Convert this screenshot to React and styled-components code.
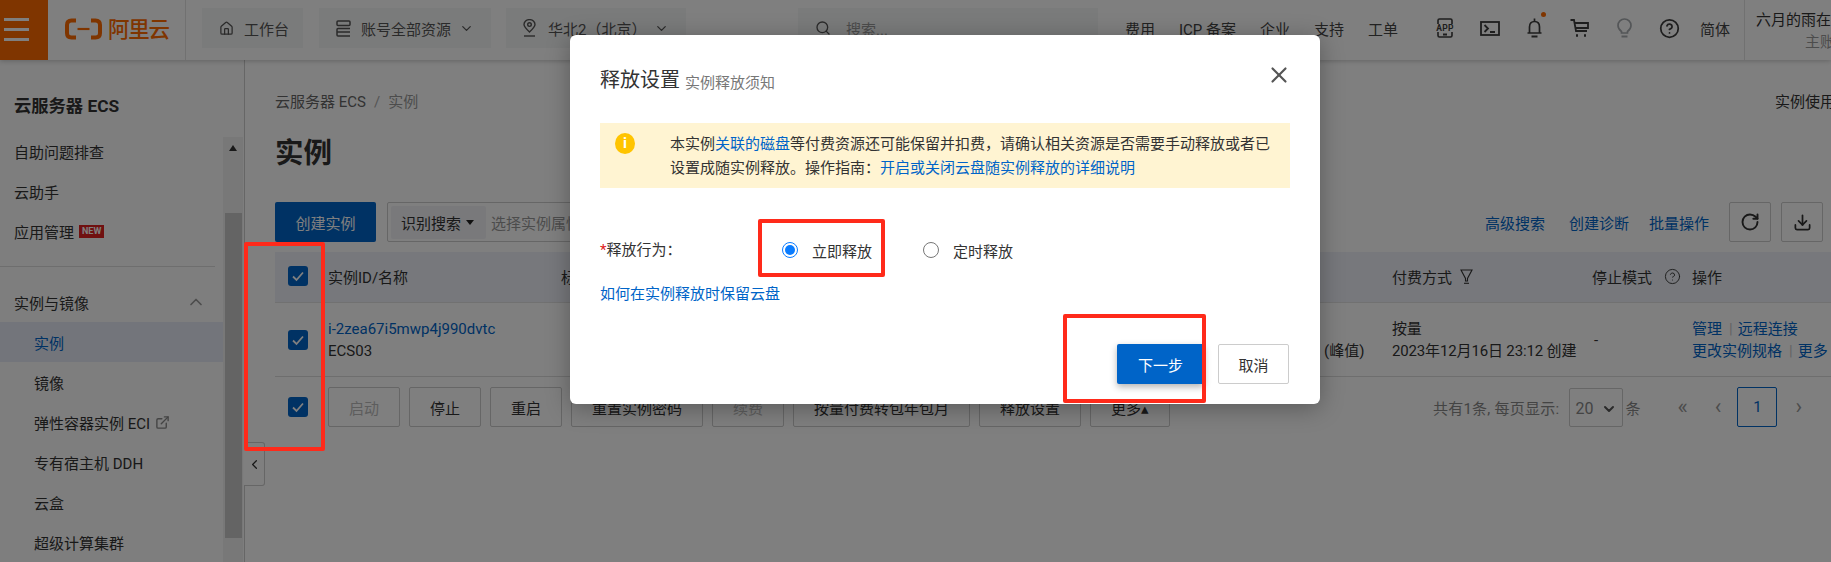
import React from "react";
import styled, { createGlobalStyle } from "styled-components";
import { Home, ChevronDown, ChevronUp, ChevronLeft, Search, X, RotateCw, Download, CircleHelp, ExternalLink } from "lucide-react";

const Global = createGlobalStyle`
  html, body { margin: 0; padding: 0; overflow: hidden; background: #fff; }
  body { font-family: Roboto, "Noto Sans CJK SC", sans-serif; font-size: 15px; color: #333; }
  * { box-sizing: border-box; }
`;

const Page = styled.div`
  position: relative;
  width: 1831px;
  height: 562px;
  overflow: hidden;
  display: flex;
  flex-direction: column;
  background: #fff;
`;

const Overlay = styled.div`
  position: absolute;
  inset: 0;
  z-index: 10;
  background: rgba(0, 0, 0, 0.5);
`;

/* ---------- top bar ---------- */
const TopBar = styled.header`
  flex: none;
  height: 60px;
  display: flex;
  background: #fff;
  box-shadow: 0 1px 5px rgba(0, 0, 0, 0.22);
  position: relative;
  z-index: 2;
  white-space: nowrap;
`;
const Burger = styled.div`
  width: 48px;
  background: #ff6a00;
  display: flex;
  flex-direction: column;
  gap: 7px;
  padding: 18px 0 0 4px;
  span { display: block; width: 25px; height: 3px; background: #fff; }
`;
const LogoWrap = styled.div`
  width: 138px;
  border-right: 1px solid #e3e3e3;
  display: flex;
  align-items: center;
  padding: 0 0 2px 17px;
  gap: 6px;
  color: #ff6a00;
  svg { display: block; }
`;
const LogoText = styled.span`
  font-size: 21.5px;
  font-weight: 500;
  letter-spacing: -1.2px;
  line-height: 24px;
  margin-top: 2px;
`;
const NavTab = styled.div`
  height: 40px;
  width: ${(p) => p.$w}px;
  margin: 8px 0 0 ${(p) => p.$ml}px;
  background: #f5f6f6;
  display: flex;
  align-items: center;
  gap: ${(p) => p.$gap || 10}px;
  padding-left: 17px;
  color: #555;
  svg { flex: none; }
`;
const Chevron = styled(ChevronDown)`
  margin-left: ${(p) => p.$ml}px;
`;
const SearchBox = styled(NavTab)`
  color: #999;
  gap: 15px;
  svg { color: #555; }
`;
const NavRight = styled.nav`
  display: flex;
  align-items: center;
  height: 56px;
  margin-left: 27px;
  color: #444;
`;
const NavLink = styled.span`
  margin-right: 24px;
  &:last-of-type { margin-right: 13px; }
`;
const IconSlot = styled.div`
  position: relative;
  width: 45px;
  display: flex;
  justify-content: center;
  align-items: center;
  color: #3c3c3c;
`;
const Dot = styled.i`
  position: absolute;
  top: -6px;
  left: 29px;
  width: 5px;
  height: 5px;
  border-radius: 50%;
  background: #ff6a00;
`;
const Lang = styled.span`
  margin-left: 8px;
  color: #444;
`;
const User = styled.div`
  height: 60px;
  margin-left: 14px;
  flex: 1;
  border-left: 1px solid #e3e3e3;
  padding: 9px 0 0 11px;
  line-height: 22px;
  overflow: hidden;
  color: #333;
`;
const UserRole = styled.div`
  margin: 0 0 0 49px;
  color: #999;
`;

/* ---------- body ---------- */
const Body = styled.div`
  flex: 1;
  min-height: 0;
  display: flex;
  position: relative;
`;
const Sidebar = styled.aside`
  flex: none;
  width: 245px;
  display: flex;
  border-right: 1px solid #ccc;
  background: #fcfcfc;
`;
const SideContent = styled.div`
  width: 223px;
  flex: none;
`;
const SideTitle = styled.div`
  height: 71px;
  padding: 34px 0 0 14px;
  font-size: 17.3px;
  font-weight: 700;
  line-height: 24px;
  color: #333;
`;
const SideItem = styled.div`
  height: 40px;
  display: flex;
  align-items: center;
  gap: 5px;
  padding-left: ${(p) => (p.$sub ? 34 : 14)}px;
  color: ${(p) => (p.$active ? "#0064c8" : "#333")};
  background: ${(p) => (p.$active ? "#e6ebf6" : "transparent")};
  white-space: nowrap;
`;
const GroupHead = styled(SideItem)`
  justify-content: space-between;
  padding-right: 17px;
`;
const SideDivider = styled.hr`
  width: 215px;
  margin: 15px 0 0;
  border: 0;
  border-top: 1px solid #ddd;
  height: 16px;
`;
const NewTag = styled.span`
  background: #e02020;
  color: #fff;
  font-size: 9px;
  font-weight: 700;
  line-height: 13px;
  padding: 0 3px;
`;
const ScrollTrack = styled.div`
  width: 20px;
  margin-top: 77px;
  background: #f1f1f1;
  position: relative;
  padding: 76px 1px 0 2px;
`;
const ScrollArrow = styled.i`
  position: absolute;
  top: 8px;
  left: 6px;
  border: 4.5px solid transparent;
  border-top: 0;
  border-bottom: 6px solid #333;
`;
const ScrollThumb = styled.div`
  height: 325px;
  background: #c8c8c8;
`;
const Collapse = styled.div`
  position: absolute;
  left: 244px;
  top: 382px;
  width: 21px;
  height: 44px;
  border: 1px solid #ccc;
  border-left: 0;
  border-radius: 0 3px 3px 0;
  background: #fff;
  display: flex;
  align-items: center;
  justify-content: center;
  color: #333;
`;

/* ---------- main ---------- */
const Main = styled.main`
  flex: 1;
  min-width: 0;
  padding: 31px 0 0 30px;
`;
const CrumbRow = styled.div`
  display: flex;
  justify-content: space-between;
  line-height: 22px;
  white-space: nowrap;
  overflow: hidden;
`;
const Crumbs = styled.div`
  color: #666;
  i { font-style: normal; margin: 0 8px; color: #aaa; }
  b { font-weight: 400; color: #999; }
`;
const Usage = styled.div`
  width: 56px;
  color: #333;
  overflow: hidden;
`;
const PageTitle = styled.h1`
  margin: 21px 0 0;
  font-size: 28.5px;
  font-weight: 700;
  line-height: 40px;
  color: #333;
`;
const Toolbar = styled.div`
  margin-top: 28px;
  height: 40px;
  display: flex;
  align-items: stretch;
`;
const Primary = styled.button`
  width: 101px;
  border: 0;
  border-radius: 2px;
  background: #0064c8;
  color: #fff;
  font: inherit;
  font-size: 15px;
  padding: 0;
`;
const SearchField = styled.div`
  margin-left: 11px;
  width: 700px;
  border: 1px solid #ccc;
  border-radius: 2px;
  display: flex;
  align-items: center;
  padding-left: 3px;
  color: #999;
`;
const FieldType = styled.div`
  height: 33px;
  width: 95px;
  background: #f2f3f7;
  border-radius: 2px;
  display: flex;
  align-items: center;
  gap: 5px;
  padding-left: 10px;
  margin-right: 5px;
  color: #333;
  &::after {
    content: "";
    border: 4.5px solid transparent;
    border-bottom: 0;
    border-top: 5px solid #222;
  }
`;
const ToolLinks = styled.div`
  margin-left: auto;
  display: flex;
  align-items: center;
  color: #0064c8;
  padding-right: 8px;
`;
const ToolLink = styled.a`
  margin-right: ${(p) => p.$mr}px;
`;
const IconBtn = styled.div`
  width: 42px;
  height: 40px;
  margin-right: ${(p) => p.$mr}px;
  border: 1px solid #ccc;
  border-radius: 2px;
  display: flex;
  align-items: center;
  justify-content: center;
  color: #333;
`;

const cols = "53px 233px 763px 68px 200px 100px 139px";
const HeadRow = styled.div`
  margin-top: 10px;
  height: 51px;
  padding-bottom: 2px;
  display: grid;
  grid-template-columns: ${cols};
  align-items: center;
  background: #eef1f8;
  border-bottom: 1px solid #e3e3e3;
  white-space: nowrap;
`;
const Row = styled.div`
  height: 74px;
  display: grid;
  grid-template-columns: ${cols};
  align-items: center;
  border-bottom: 1px solid #ddd;
  white-space: nowrap;
  line-height: 22px;
`;
const CheckCell = styled.div`
  padding-left: 13px;
  display: flex;
`;
const Check = styled.div`
  width: 20px;
  height: 20px;
  border-radius: 3px;
  background: #0064c8;
  display: flex;
  align-items: center;
  justify-content: center;
`;
const HeadCell = styled.div`
  display: flex;
  align-items: center;
  gap: 8px;
  color: #333;
`;
const HelpGap = styled(HeadCell)`
  gap: 12px;
`;
const Link = styled.a`
  color: #0064c8;
`;
const Sep = styled.i`
  font-style: normal;
  color: #c8c8c8;
  margin: 0 5px 0 7px;
`;
const Dash = styled.div`
  padding-left: 2px;
`;
const BillingCell = styled.div`
  letter-spacing: -0.15px;
`;
const ActionRow = styled.div`
  display: flex;
  align-items: flex-start;
  padding-top: 10px;
`;
const ActionCheck = styled(CheckCell)`
  width: 53px;
  padding-top: 10px;
  flex: none;
`;
const ActionBtns = styled.div`
  display: flex;
  gap: 9px;
`;
const ActionBtn = styled.button`
  height: 40px;
  padding: 0 20px;
  border: 1px solid #ccc;
  border-radius: 2px;
  background: #fff;
  color: ${(p) => (p.disabled ? "#bbb" : "#333")};
  font: inherit;
  font-size: 15px;
  white-space: nowrap;
`;
const Pager = styled.div`
  margin-left: auto;
  padding-right: 29px;
  display: flex;
  align-items: center;
  height: 40px;
  color: #888;
  white-space: nowrap;
`;
const PagerLabel = styled.span`
  letter-spacing: 0.25px;
`;
const PageSelect = styled.div`
  width: 54px;
  height: 39px;
  margin: 1px 2px 0 10px;
  border: 1px solid #ccc;
  border-radius: 2px;
  display: flex;
  align-items: center;
  justify-content: space-between;
  padding: 2px 5px 0 5px;
  font-size: 16px;
  color: #888;
  svg { color: #555; }
`;
const PageArrow = styled.span`
  margin-left: ${(p) => p.$ml}px;
  color: #999;
  font-size: 22px;
  line-height: 20px;
`;
const PageNum = styled.div`
  margin-left: 16px;
  width: 40px;
  height: 40px;
  border: 1px solid #0064c8;
  border-radius: 2px;
  color: #0064c8;
  display: flex;
  align-items: center;
  justify-content: center;
`;

/* ---------- modal ---------- */
const Modal = styled.section`
  position: absolute;
  z-index: 20;
  left: 570px;
  top: 35px;
  width: 750px;
  height: 369px;
  background: #fff;
  border-radius: 6px;
  box-shadow: 0 4px 24px rgba(0, 0, 0, 0.3);
  padding: 30px 30px 0;
`;
const ModalHead = styled.div`
  display: flex;
  align-items: center;
  height: 30px;
  color: #333;
  white-space: nowrap;
`;
const ModalTitle = styled.h2`
  margin: 0;
  font-size: 20px;
  font-weight: 400;
  line-height: 30px;
  color: #333;
`;
const ModalSub = styled.span`
  margin: 2px 0 0 5px;
  font-size: 15px;
  color: #777;
`;
const CloseBtn = styled.div`
  margin: -10px -2px 0 auto;
  display: flex;
  color: #555;
`;
const Alert = styled.div`
  margin-top: 28px;
  height: 65px;
  background: #fff4d2;
  display: flex;
  padding: 9px 0 0 15px;
`;
const AlertText = styled.div`
  width: 612px;
  margin-left: 35px;
  line-height: 24px;
  color: #333;
`;
const AlertIcon = styled.div`
  flex: none;
  width: 20px;
  height: 21px;
  margin-top: 1px;
  border-radius: 50%;
  background: #ffc400;
  color: #fff;
  font-size: 15px;
  font-weight: 700;
  line-height: 21px;
  text-align: center;
`;
const FormRow = styled.div`
  margin-top: 50px;
  height: 24px;
  display: flex;
  align-items: center;
`;
const FormLabel = styled.div`
  width: 182px;
  margin-top: -3px;
  color: #333;
  b { font-weight: 400; color: #e02020; }
`;
const RadioItem = styled.label`
  display: flex;
  align-items: center;
  gap: 14px;
  width: 141px;
  color: #333;
`;
const Radio = styled.i`
  width: 16px;
  height: 16px;
  border-radius: 50%;
  border: 1px solid ${(p) => (p.$on ? "#0a7cff" : "#777")};
  display: flex;
  align-items: center;
  justify-content: center;
  &::after {
    content: "";
    display: ${(p) => (p.$on ? "block" : "none")};
    width: 10px;
    height: 10px;
    border-radius: 50%;
    background: #0a7cff;
  }
`;
const FormLink = styled.a`
  display: block;
  margin-top: 21px;
  line-height: 22px;
  color: #0064c8;
`;
const ModalFoot = styled.div`
  margin-top: 39px;
  display: flex;
  justify-content: flex-end;
  gap: 14px;
  padding-right: 1px;
`;
const NextBtn = styled(Primary)`
  width: 87px;
  height: 40px;
  box-shadow: 0 3px 7px rgba(0, 0, 0, 0.3);
`;
const CancelBtn = styled.button`
  width: 71px;
  height: 40px;
  padding: 0;
  border: 1px solid #ccc;
  border-radius: 2px;
  background: #fff;
  color: #333;
  font: inherit;
  font-size: 15px;
`;

/* ---------- red annotation frames ---------- */
const Mark = styled.div`
  position: absolute;
  z-index: 30;
  border: 4px solid #ff2a1a;
  border-radius: 2px;
  left: ${(p) => p.$x}px;
  top: ${(p) => p.$y}px;
  width: ${(p) => p.$w}px;
  height: ${(p) => p.$h}px;
`;

const CheckMark = () => (
  <Check>
    <svg width="14" height="14" viewBox="0 0 14 14" fill="none" stroke="#fff" strokeWidth="1.8">
      <path d="M2 7.5 5.5 11 12 3.5" />
    </svg>
  </Check>
);
const Logo = () => (
  <svg width="37" height="22" viewBox="0 0 37 22" fill="none" stroke="#ff6a00">
    <path d="M11 2.5 H6.5 Q2 2.5 2 7 V15 Q2 19.5 6.5 19.5 H11" strokeWidth="4" />
    <path d="M26 2.5 H30.5 Q35 2.5 35 7 V15 Q35 19.5 30.5 19.5 H26" strokeWidth="4" />
    <path d="M12.5 11 H24.5" strokeWidth="2.2" />
  </svg>
);
const Stack = () => (
  <svg width="15" height="17" viewBox="0 0 15 17" fill="none" stroke="currentColor" strokeWidth="1.5">
    <rect x="1" y="1" width="13" height="4.5" rx="1" />
    <path d="M14 8.5 H2 Q1 8.5 1 9.5 V15 Q1 16 2 16 H14 M1 12 H14" />
  </svg>
);
const Pin = () => (
  <svg width="13" height="18" viewBox="0 0 13 18" fill="none" stroke="currentColor" strokeWidth="1.4">
    <path d="M6.5 13 C3 9.8 1 7.8 1 5.6 A5.5 5 0 0 1 12 5.6 C12 7.8 10 9.8 6.5 13Z" />
    <circle cx="6.5" cy="5.6" r="1.8" />
    <path d="M1 17 H12" />
  </svg>
);
const AppIcon = () => (
  <svg width="20" height="20" viewBox="0 0 20 20" fill="none" stroke="currentColor" strokeWidth="1.6">
    <path d="M3 6 V2.5 Q3 1 4.5 1 H15.5 Q17 1 17 2.5 V6 M3 14 V17.5 Q3 19 4.5 19 H15.5 Q17 19 17 17.5 V14" />
    <path d="M8 16.5 H12" strokeWidth="2" />
    <text x="10" y="13" textAnchor="middle" fontSize="8.5" fontWeight="700" fontFamily="Roboto" letterSpacing="0.3" fill="currentColor" stroke="none">APP</text>
  </svg>
);
const TerminalIcon = () => (
  <svg width="20" height="15" viewBox="0 0 20 15" fill="none" stroke="currentColor" strokeWidth="1.8">
    <rect x="1" y="1" width="18" height="13" />
    <path d="M4.5 4 8 7.5 4.5 11 M10 11 H15" />
  </svg>
);
const BellIcon = () => (
  <svg width="15" height="20" viewBox="0 0 15 20" fill="none" stroke="currentColor" strokeWidth="1.7">
    <path d="M7.5 0.5 V3 M2.5 14.5 V9 C2.5 5.5 4.5 3.5 7.5 3.5 C10.5 3.5 12.5 5.5 12.5 9 V14.5 M0.5 15 H14.5" />
    <path d="M4.5 18.5 H10.5" strokeWidth="2" />
  </svg>
);
const CartIcon = () => (
  <svg width="19" height="18" viewBox="0 0 19 18" fill="none" stroke="currentColor" strokeWidth="1.8">
    <path d="M0.5 1 H4 L6 12 H17 M4.5 4 H18 V9 H5.5" />
    <path d="M6 16.5 H8 M14 16.5 H16" strokeWidth="2.4" />
  </svg>
);
const BulbIcon = () => (
  <svg width="15" height="20" viewBox="0 0 15 20" fill="none" stroke="#a8acb0" strokeWidth="1.7">
    <path d="M4.5 13.5 C2.5 12 1 10 1 7.5 A6.5 6.5 0 0 1 14 7.5 C14 10 12.5 12 10.5 13.5 V15 H4.5Z" />
    <path d="M4.5 18.5 H10.5" strokeWidth="2" />
  </svg>
);
const Funnel = () => (
  <svg width="13" height="15" viewBox="0 0 13 15" fill="none" stroke="currentColor" strokeWidth="1.1">
    <path d="M1 1 H12 L7.5 9.5 V12 H5.5 V9.5Z" />
    <path d="M4 14.3 H9" />
  </svg>
);

export default function App() {
  return (
    <Page>
      <Global />
      <TopBar>
        <Burger><span /><span /><span /></Burger>
        <LogoWrap>
          <Logo />
          <LogoText>阿里云</LogoText>
        </LogoWrap>
        <NavTab $w={101} $ml={16}><Home size={15} />工作台</NavTab>
        <NavTab $w={172} $ml={16}>
          <Stack />账号全部资源<Chevron size={15} $ml={-2} />
        </NavTab>
        <NavTab $w={180} $ml={15} $gap={12}>
          <Pin />华北2（北京）<Chevron size={15} $ml={-4} />
        </NavTab>
        <SearchBox $w={300} $ml={112}><Search size={16} />搜索...</SearchBox>
        <NavRight>
          <NavLink>费用</NavLink>
          <NavLink>ICP 备案</NavLink>
          <NavLink>企业</NavLink>
          <NavLink>支持</NavLink>
          <NavLink>工单</NavLink>
          <IconSlot><AppIcon /></IconSlot>
          <IconSlot><TerminalIcon /></IconSlot>
          <IconSlot><BellIcon /><Dot /></IconSlot>
          <IconSlot><CartIcon /></IconSlot>
          <IconSlot><BulbIcon /></IconSlot>
          <IconSlot><CircleHelp size={21} strokeWidth={2} /></IconSlot>
          <Lang>简体</Lang>
        </NavRight>
        <User>
          六月的雨在
          <UserRole>主账号</UserRole>
        </User>
      </TopBar>

      <Body>
        <Sidebar>
          <SideContent>
            <SideTitle>云服务器 ECS</SideTitle>
            <SideItem>自助问题排查</SideItem>
            <SideItem>云助手</SideItem>
            <SideItem>应用管理<NewTag>NEW</NewTag></SideItem>
            <SideDivider />
            <GroupHead>实例与镜像<ChevronUp size={20} color="#999" /></GroupHead>
            <SideItem $sub $active>实例</SideItem>
            <SideItem $sub>镜像</SideItem>
            <SideItem $sub>弹性容器实例 ECI<ExternalLink size={15} color="#888" strokeWidth={2.2} /></SideItem>
            <SideItem $sub>专有宿主机 DDH</SideItem>
            <SideItem $sub>云盒</SideItem>
            <SideItem $sub>超级计算集群</SideItem>
          </SideContent>
          <ScrollTrack>
            <ScrollArrow />
            <ScrollThumb />
          </ScrollTrack>
        </Sidebar>
        <Collapse><ChevronLeft size={15} /></Collapse>

        <Main>
          <CrumbRow>
            <Crumbs>云服务器 ECS<i>/</i><b>实例</b></Crumbs>
            <Usage>实例使用</Usage>
          </CrumbRow>
          <PageTitle>实例</PageTitle>
          <Toolbar>
            <Primary>创建实例</Primary>
            <SearchField>
              <FieldType>识别搜索</FieldType>
              选择实例属性项搜索
            </SearchField>
            <ToolLinks>
              <ToolLink $mr={24}>高级搜索</ToolLink>
              <ToolLink $mr={20}>创建诊断</ToolLink>
              <ToolLink $mr={20}>批量操作</ToolLink>
              <IconBtn $mr={10}><RotateCw size={20} strokeWidth={2.3} /></IconBtn>
              <IconBtn $mr={0}><Download size={19} strokeWidth={2.2} /></IconBtn>
            </ToolLinks>
          </Toolbar>

          <HeadRow>
            <CheckCell><CheckMark /></CheckCell>
            <HeadCell>实例ID/名称</HeadCell>
            <HeadCell>标签</HeadCell>
            <HeadCell />
            <HeadCell>付费方式<Funnel /></HeadCell>
            <HelpGap>停止模式<CircleHelp size={17} strokeWidth={1.3} /></HelpGap>
            <HeadCell>操作</HeadCell>
          </HeadRow>
          <Row>
            <CheckCell><CheckMark /></CheckCell>
            <div>
              <Link>i-2zea67i5mwp4j990dvtc</Link>
              <div>ECS03</div>
            </div>
            <div />
            <div><br />(峰值)</div>
            <BillingCell>按量<br />2023年12月16日 23:12 创建</BillingCell>
            <Dash>-</Dash>
            <div>
              <Link>管理</Link><Sep>|</Sep><Link>远程连接</Link><br />
              <Link>更改实例规格</Link><Sep>|</Sep><Link>更多</Link>
            </div>
          </Row>
          <ActionRow>
            <ActionCheck><CheckMark /></ActionCheck>
            <ActionBtns>
              <ActionBtn disabled>启动</ActionBtn>
              <ActionBtn>停止</ActionBtn>
              <ActionBtn>重启</ActionBtn>
              <ActionBtn>重置实例密码</ActionBtn>
              <ActionBtn disabled>续费</ActionBtn>
              <ActionBtn>按量付费转包年包月</ActionBtn>
              <ActionBtn>释放设置</ActionBtn>
              <ActionBtn>更多▴</ActionBtn>
            </ActionBtns>
            <Pager>
              <PagerLabel>共有1条, 每页显示:</PagerLabel>
              <PageSelect>20<ChevronDown size={16} strokeWidth={3} /></PageSelect>
              条
              <PageArrow $ml={37}>«</PageArrow>
              <PageArrow $ml={27}>‹</PageArrow>
              <PageNum>1</PageNum>
              <PageArrow $ml={18}>›</PageArrow>
            </Pager>
          </ActionRow>
        </Main>
      </Body>

      <Overlay />

      <Modal>
        <ModalHead>
          <ModalTitle>释放设置</ModalTitle>
          <ModalSub>实例释放须知</ModalSub>
          <CloseBtn><X size={26} strokeWidth={2} /></CloseBtn>
        </ModalHead>
        <Alert>
          <AlertIcon>i</AlertIcon>
          <AlertText>
            本实例<Link>关联的磁盘</Link>等付费资源还可能保留并扣费，请确认相关资源是否需要手动释放或者已设置成随实例释放。操作指南：<Link>开启或关闭云盘随实例释放的详细说明</Link>
          </AlertText>
        </Alert>
        <FormRow>
          <FormLabel><b>*</b>释放行为：</FormLabel>
          <RadioItem><Radio $on />立即释放</RadioItem>
          <RadioItem><Radio />定时释放</RadioItem>
        </FormRow>
        <FormLink>如何在实例释放时保留云盘</FormLink>
        <ModalFoot>
          <NextBtn>下一步</NextBtn>
          <CancelBtn>取消</CancelBtn>
        </ModalFoot>
      </Modal>

      <Mark $x={244} $y={242} $w={81} $h={209} />
      <Mark $x={758} $y={219} $w={127} $h={58} />
      <Mark $x={1063} $y={314} $w={143} $h={89} />
    </Page>
  );
}
